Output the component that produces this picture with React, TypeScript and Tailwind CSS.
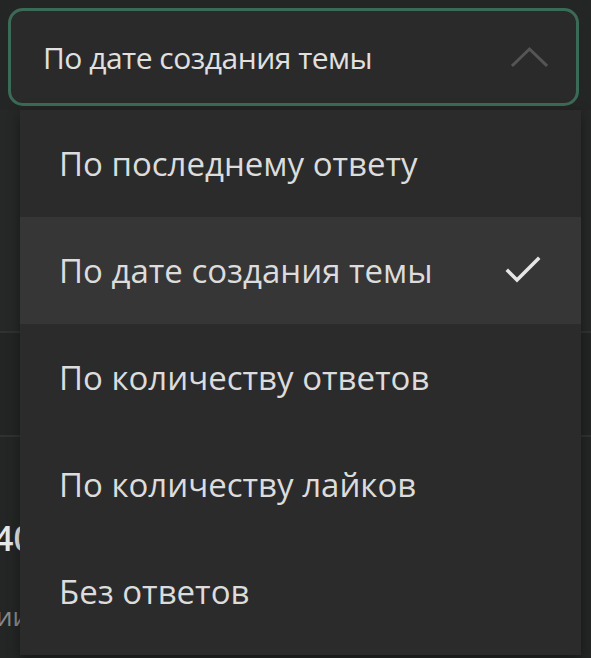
const options = [
  'По последнему ответу',
  'По дате создания темы',
  'По количеству ответов',
  'По количеству лайков',
  'Без ответов',
]

const selected = 1

function ChevronUp() {
  return (
    <svg width="37" height="22" viewBox="0 0 37 22" fill="none">
      <path d="M2 19 L18.5 3 L35 19" stroke="#555555" strokeWidth="3" strokeLinecap="square" />
    </svg>
  )
}

function Check() {
  return (
    <svg width="36" height="30" viewBox="0 0 36 30" fill="none">
      <path d="M3 15 L12 24 L33 3" stroke="#e6e6e6" strokeWidth="3.5" strokeLinecap="square" />
    </svg>
  )
}

export default function App() {
  return (
    <div
      className="relative w-[591px] h-[658px] overflow-hidden bg-[#242626] text-[#dedede]"
      style={{ fontFamily: '"Open Sans", "Noto Sans", sans-serif' }}
    >
      <div className="px-[8px] pt-[8px]">
        <button className="flex w-[571px] h-[98px] items-center justify-between rounded-[15px] border-[3px] border-[#3b6b57] bg-[#2a2a2a] pl-[32px] pr-[28px]">
          <span className="text-[30px] tracking-[-0.5px] text-[#e0e0e0]">По дате создания темы</span>
          <ChevronUp />
        </button>
      </div>

      {/* content underneath the menu */}
      <div className="mt-[4px]">
        <div className="h-[223px] border-b-2 border-[#303232] bg-[#262828]" />
        <div className="h-[104px] border-b-2 border-[#303232] bg-[#232525]" />
        <div className="pt-[84px]">
          <p className="-ml-[6px] text-[34px] font-semibold leading-none text-[#e8e8e8]">40</p>
          <p className="-ml-[4px] mt-[48px] text-[26px] leading-none text-[#8a8a8a]">ии</p>
        </div>
      </div>

      <div className="absolute left-[20px] top-[110px] w-[561px] bg-[#2b2b2b] pb-[10px] shadow-[0_4px_12px_rgba(0,0,0,0.4)]">
        {options.map((o, i) => (
          <div
            key={o}
            className={`flex h-[107px] items-center justify-between pl-[39px] pr-[40px] ${
              i === selected ? 'bg-[#363636]' : ''
            }`}
          >
            <span className="text-[33px] text-[#dcdcdc]">{o}</span>
            {i === selected && <Check />}
          </div>
        ))}
      </div>
    </div>
  )
}
